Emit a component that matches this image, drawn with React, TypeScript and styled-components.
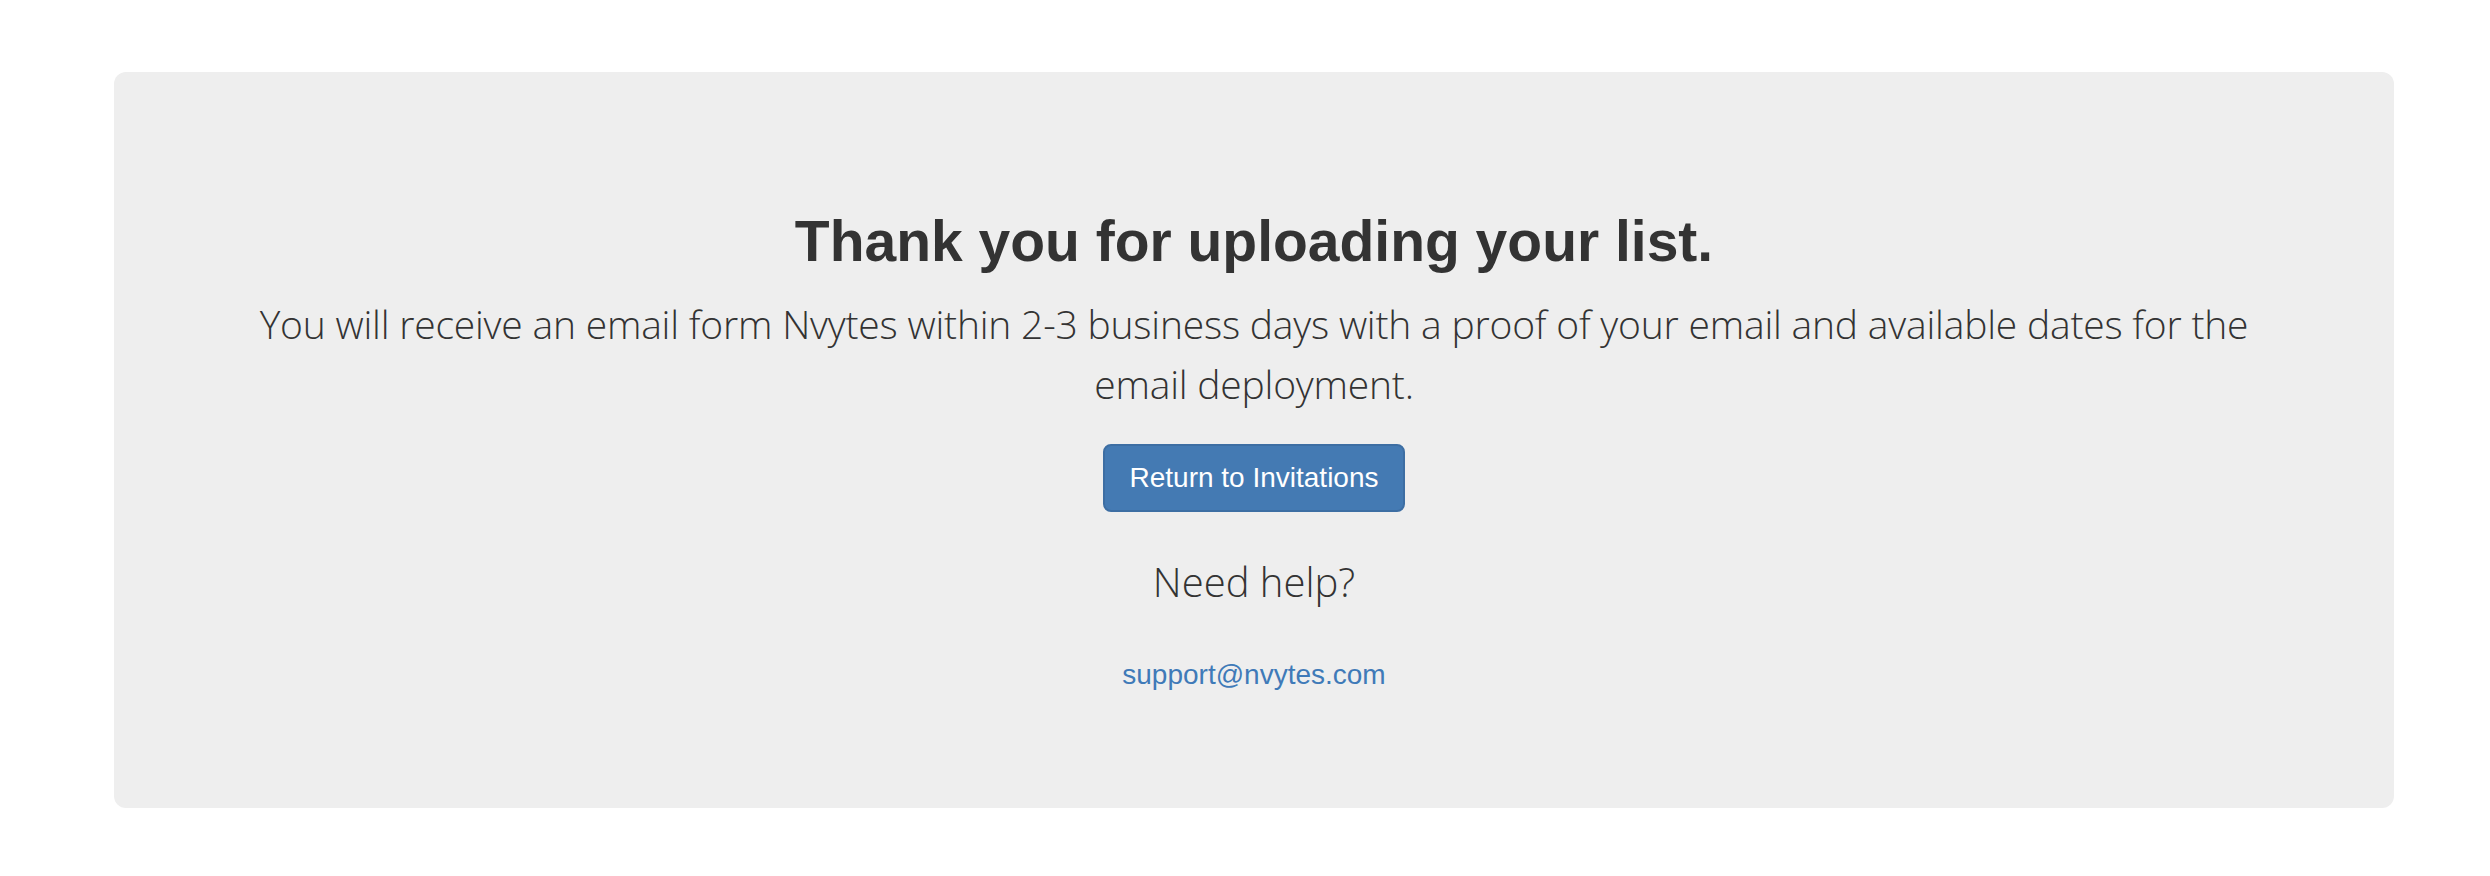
import React from 'react';
import styled, { createGlobalStyle } from 'styled-components';

const GlobalStyle = createGlobalStyle`
    html, body {
        margin: 0;
        padding: 0;
        background: #ffffff;
    }
    body {
        font-family: "Liberation Sans", Arial, sans-serif;
        color: #333333;
    }
`;

const Page = styled.div`
    padding: 72px 96px 70px 114px;
`;
Page.displayName = 'Page';

const Jumbotron = styled.section`
    background: #eeeeee;
    border-radius: 12px;
    padding: 96px 120px 113px;
    display: flex;
    flex-direction: column;
    align-items: center;
    text-align: center;
`;
Jumbotron.displayName = 'Jumbotron';

const Heading = styled.h2`
    margin: 40px 0 20px;
    font-size: 57px;
    line-height: 66px;
    font-weight: 700;
    color: #333333;
`;
Heading.displayName = 'Heading';

const Lead = styled.p`
    margin: 0 0 30px;
    font-family: "Open Sans", "Liberation Sans", sans-serif;
    font-size: 39px;
    letter-spacing: -0.2px;
    line-height: 60px;
    font-weight: 300;
    color: #333333;
`;
Lead.displayName = 'Lead';

const HelpTitle = styled(Lead)`
    margin-bottom: 42px;
    font-size: 40px;
    letter-spacing: 0;
`;
HelpTitle.displayName = 'HelpTitle';

const PrimaryButton = styled.a`
    display: inline-block;
    box-sizing: border-box;
    height: 68px;
    padding: 12px 24px;
    margin-bottom: 40px;
    font-size: 28px;
    line-height: 40px;
    color: #ffffff;
    background: #447ab3;
    border: 2px solid #3d6ea3;
    border-radius: 8px;
    text-decoration: none;
    cursor: pointer;
`;
PrimaryButton.displayName = 'PrimaryButton';

const SupportLink = styled.a`
    display: block;
    margin-top: 1px;
    font-size: 28px;
    line-height: 40px;
    color: #3f7ab8;
    text-decoration: none;
`;
SupportLink.displayName = 'SupportLink';

export default function App() {
    return (
        <>
            <GlobalStyle />
            <Page>
                <Jumbotron>
                    <Heading>Thank you for uploading your list.</Heading>
                    <Lead>
                        You will receive an email form Nvytes within 2-3
                        business days with a proof of your email and available
                        dates for the email deployment.
                    </Lead>
                    <PrimaryButton href="#">Return to Invitations</PrimaryButton>
                    <HelpTitle>Need help?</HelpTitle>
                    <SupportLink href="mailto:support@nvytes.com">
                        support@nvytes.com
                    </SupportLink>
                </Jumbotron>
            </Page>
        </>
    );
}
